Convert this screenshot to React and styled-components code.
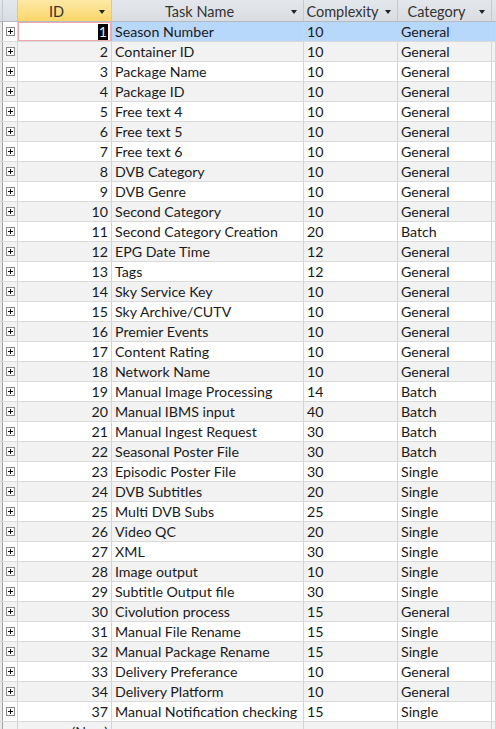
import React from "react";
import styled, { createGlobalStyle } from "styled-components";

const GlobalStyle = createGlobalStyle`
  html, body {
    margin: 0;
    padding: 0;
    background: #fff;
  }
  body {
    font-family: Lato, "Liberation Sans", sans-serif;
    overflow: hidden;
  }
`;

const COLUMNS = "3px 15px 94px 192px 94px 94px 1fr";

const tasks = [
  [1, "Season Number", 10, "General"],
  [2, "Container ID", 10, "General"],
  [3, "Package Name", 10, "General"],
  [4, "Package ID", 10, "General"],
  [5, "Free text 4", 10, "General"],
  [6, "Free text 5", 10, "General"],
  [7, "Free text 6", 10, "General"],
  [8, "DVB Category", 10, "General"],
  [9, "DVB Genre", 10, "General"],
  [10, "Second Category", 10, "General"],
  [11, "Second Category Creation", 20, "Batch"],
  [12, "EPG Date Time", 12, "General"],
  [13, "Tags", 12, "General"],
  [14, "Sky Service Key", 10, "General"],
  [15, "Sky Archive/CUTV", 10, "General"],
  [16, "Premier Events", 10, "General"],
  [17, "Content Rating", 10, "General"],
  [18, "Network Name", 10, "General"],
  [19, "Manual Image Processing", 14, "Batch"],
  [20, "Manual IBMS input", 40, "Batch"],
  [21, "Manual Ingest Request", 30, "Batch"],
  [22, "Seasonal Poster File", 30, "Batch"],
  [23, "Episodic Poster File", 30, "Single"],
  [24, "DVB Subtitles", 20, "Single"],
  [25, "Multi DVB Subs", 25, "Single"],
  [26, "Video QC", 20, "Single"],
  [27, "XML", 30, "Single"],
  [28, "Image output", 10, "Single"],
  [29, "Subtitle Output file", 30, "Single"],
  [30, "Civolution process", 15, "General"],
  [31, "Manual File Rename", 15, "Single"],
  [32, "Manual Package Rename", 15, "Single"],
  [33, "Delivery Preferance", 10, "General"],
  [34, "Delivery Platform", 10, "General"],
  [37, "Manual Notification checking", 15, "Single"],
];

const Sheet = styled.div`
  width: 496px;
  font-size: 14.2px;
  color: #1a1a1a;
`;

const HeaderRow = styled.div`
  display: grid;
  grid-template-columns: ${COLUMNS};
  height: 22px;
  box-sizing: border-box;
  border-bottom: 1px solid #b4bac2;
  background: linear-gradient(#e4e7eb, #d9dde2);
`;

const HeadCell = styled.div`
  position: relative;
  display: flex;
  align-items: center;
  justify-content: center;
  padding-right: ${(p) => (p.$arrow ? "16px" : "0")};
  padding-top: 1px;
  box-sizing: border-box;
  border-right: 1px solid ${(p) => (p.$blank ? "transparent" : "#c3c9d0")};
  background: ${(p) =>
    p.$active ? "linear-gradient(#fde9a6, #fbd66a)" : "transparent"};
  color: #333;
  font-size: 14.5px;
  white-space: nowrap;
  overflow: hidden;
`;

const Arrow = styled.span`
  position: absolute;
  right: 6px;
  top: 10px;
  width: 0;
  height: 0;
  border-left: 3.5px solid transparent;
  border-right: 3.5px solid transparent;
  border-top: 4px solid #222;
`;

const Row = styled.div`
  display: grid;
  grid-template-columns: ${COLUMNS};
  height: 20px;
  box-sizing: border-box;
  border-bottom: 1px solid #dadada;
  background: ${(p) => p.$bg};
`;

const Strip = styled.div`
  background: #e9e9e9;
  border-right: 1px solid #a3a3a3;
  box-sizing: border-box;
`;

const ExpandCell = styled.div`
  display: flex;
  align-items: flex-start;
  justify-content: center;
  padding-top: 5px;
  padding-left: 1px;
  box-sizing: border-box;
  border-right: 1px solid #d4d4d4;
  background: ${(p) => p.$bg};
`;

const PlusBox = styled.span`
  position: relative;
  width: 9px;
  height: 9px;
  box-sizing: border-box;
  border: 1px solid #8a8a8a;
  background: #fff;
  &::before,
  &::after {
    content: "";
    position: absolute;
    background: #000;
  }
  &::before {
    left: 1px;
    top: 3px;
    width: 5px;
    height: 1px;
  }
  &::after {
    left: 3px;
    top: 1px;
    width: 1px;
    height: 5px;
  }
`;

const Cell = styled.div`
  display: flex;
  align-items: center;
  justify-content: ${(p) => (p.$right ? "flex-end" : "flex-start")};
  padding: ${(p) => (p.$right ? "1px 3px 0 0" : "1px 0 0 3px")};
  box-sizing: border-box;
  border-right: 1px solid #d4d4d4;
  white-space: nowrap;
  overflow: hidden;
  line-height: 18px;
`;

const FocusCell = styled(Cell)`
  background: #fff;
  box-shadow: inset 0 0 0 1px #f2a6ad;
  border-right-color: #f2a6ad;
`;

const Caret = styled.span`
  background: #000;
  color: #dfe9ff;
  padding: 0 1px;
  line-height: 16px;
`;

const App = () => {
  const rowBg = (i) => (i === 0 ? "#b7d7fb" : i % 2 ? "#f2f2f2" : "#fff");

  return (
    <Sheet>
      <GlobalStyle />
      <HeaderRow>
        <HeadCell />
        <HeadCell />
        <HeadCell $active $arrow>
          ID
          <Arrow />
        </HeadCell>
        <HeadCell $arrow>
          Task Name
          <Arrow />
        </HeadCell>
        <HeadCell $arrow>
          Complexity
          <Arrow />
        </HeadCell>
        <HeadCell $arrow>
          Category
          <Arrow />
        </HeadCell>
        <HeadCell $blank />
      </HeaderRow>

      {tasks.map(([id, name, complexity, category], i) => (
        <Row key={id} $bg={rowBg(i)}>
          <Strip />
          <ExpandCell $bg={i === 0 ? "#fff" : rowBg(i)}>
            <PlusBox />
          </ExpandCell>
          {i === 0 ? (
            <FocusCell $right>
              <Caret>{id}</Caret>
            </FocusCell>
          ) : (
            <Cell $right>{id}</Cell>
          )}
          <Cell>{name}</Cell>
          <Cell>{complexity}</Cell>
          <Cell>{category}</Cell>
          <Cell />
        </Row>
      ))}

      <Row $bg={rowBg(tasks.length)}>
        <Strip />
        <ExpandCell $bg={rowBg(tasks.length)} />
        <Cell $right>(New)</Cell>
        <Cell />
        <Cell />
        <Cell />
        <Cell />
      </Row>
    </Sheet>
  );
};

export default App;
